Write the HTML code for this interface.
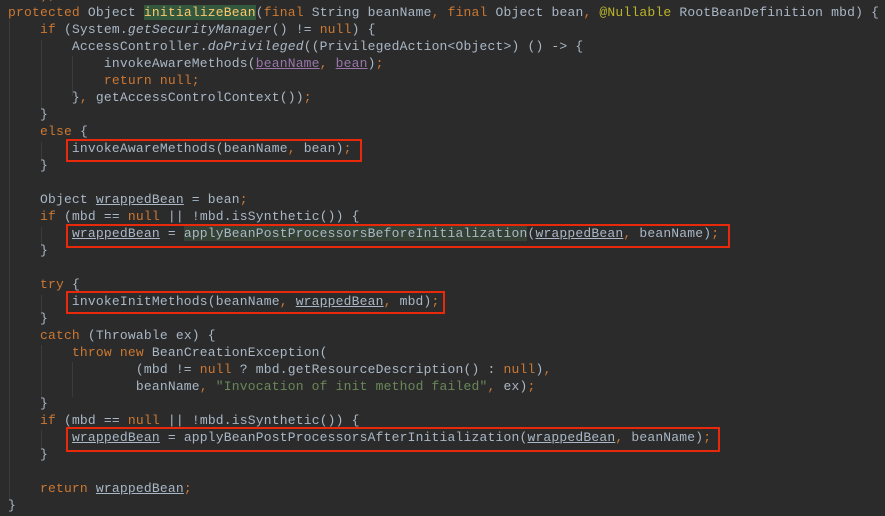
<!DOCTYPE html>
<html><head><style>
body{margin:0;width:885px;height:516px;background:#2b2b2b;overflow:hidden;position:relative;font-family:"Liberation Mono",monospace;font-size:13px;letter-spacing:0.19px;color:#a9b7c6}
.l{position:absolute;left:8px;height:17px;line-height:17px;white-space:pre}
.k{color:#cc7832}.p{color:#9876aa;text-decoration:underline}.u{text-decoration:underline}
.s{color:#6a8759}.i{font-style:italic}.a{color:#bbb529}
.m{color:#ffc66d;background:#32593d}.h{background:#344134}
.b{position:absolute;border:2px solid #e8290b;box-sizing:border-box}
.g{position:absolute;width:1px;background:#3b3b3b}
</style></head><body>
<div class="g" style="left:9px;top:20px;height:480px"></div>
<div class="g" style="left:41px;top:40px;height:70px"></div>
<div class="g" style="left:72px;top:56px;height:40px"></div>
<div class="g" style="left:41px;top:142px;height:20px"></div>
<div class="g" style="left:41px;top:227px;height:20px"></div>
<div class="g" style="left:41px;top:295px;height:20px"></div>
<div class="g" style="left:41px;top:345px;height:55px"></div>
<div class="g" style="left:72px;top:362px;height:35px"></div>
<div class="g" style="left:41px;top:430px;height:20px"></div>
<div class="l" style="top:-13px"><span class="k">    );</span></div>
<div class="l" style="top:4px"><span class="k">protected </span>Object <span class="m">initializeBean</span>(<span class="k">final </span>String beanName<span class="k">, final </span>Object bean<span class="k">, </span><span class="a">@Nullable</span> RootBeanDefinition mbd) {</div>
<div class="l" style="top:21px">    <span class="k">if </span>(System.<span class="i">getSecurityManager</span>() != <span class="k">null</span>) {</div>
<div class="l" style="top:38px">        AccessController.<span class="i">doPrivileged</span>((PrivilegedAction&lt;Object&gt;) () -&gt; {</div>
<div class="l" style="top:55px">            invokeAwareMethods(<span class="p">beanName</span><span class="k">, </span><span class="p">bean</span>)<span class="k">;</span></div>
<div class="l" style="top:72px">            <span class="k">return null;</span></div>
<div class="l" style="top:89px">        }<span class="k">, </span>getAccessControlContext())<span class="k">;</span></div>
<div class="l" style="top:106px">    }</div>
<div class="l" style="top:123px">    <span class="k">else </span>{</div>
<div class="l" style="top:140px">        invokeAwareMethods(beanName<span class="k">, </span>bean)<span class="k">;</span></div>
<div class="l" style="top:157px">    }</div>
<div class="l" style="top:191px">    Object <span class="u">wrappedBean</span> = bean<span class="k">;</span></div>
<div class="l" style="top:208px">    <span class="k">if </span>(mbd == <span class="k">null </span>|| !mbd.isSynthetic()) {</div>
<div class="l" style="top:225px">        <span class="u">wrappedBean</span> = <span class="h">applyBeanPostProcessorsBeforeInitialization</span>(<span class="u">wrappedBean</span><span class="k">, </span>beanName)<span class="k">;</span></div>
<div class="l" style="top:242px">    }</div>
<div class="l" style="top:276px">    <span class="k">try </span>{</div>
<div class="l" style="top:293px">        invokeInitMethods(beanName<span class="k">, </span><span class="u">wrappedBean</span><span class="k">, </span>mbd)<span class="k">;</span></div>
<div class="l" style="top:310px">    }</div>
<div class="l" style="top:327px">    <span class="k">catch </span>(Throwable ex) {</div>
<div class="l" style="top:344px">        <span class="k">throw new </span>BeanCreationException(</div>
<div class="l" style="top:361px">                (mbd != <span class="k">null </span>? mbd.getResourceDescription() : <span class="k">null</span>)<span class="k">,</span></div>
<div class="l" style="top:378px">                beanName<span class="k">, </span><span class="s">"Invocation of init method failed"</span><span class="k">, </span>ex)<span class="k">;</span></div>
<div class="l" style="top:395px">    }</div>
<div class="l" style="top:412px">    <span class="k">if </span>(mbd == <span class="k">null </span>|| !mbd.isSynthetic()) {</div>
<div class="l" style="top:429px">        <span class="u">wrappedBean</span> = applyBeanPostProcessorsAfterInitialization(<span class="u">wrappedBean</span><span class="k">, </span>beanName)<span class="k">;</span></div>
<div class="l" style="top:446px">    }</div>
<div class="l" style="top:480px">    <span class="k">return </span><span class="u">wrappedBean</span><span class="k">;</span></div>
<div class="l" style="top:497px">}</div>
<div class="b" style="left:66px;top:139px;width:296px;height:23px"></div>
<div class="b" style="left:66px;top:224px;width:664px;height:24px"></div>
<div class="b" style="left:66px;top:291px;width:379px;height:23px"></div>
<div class="b" style="left:66px;top:427px;width:654px;height:25px"></div>
</body></html>
